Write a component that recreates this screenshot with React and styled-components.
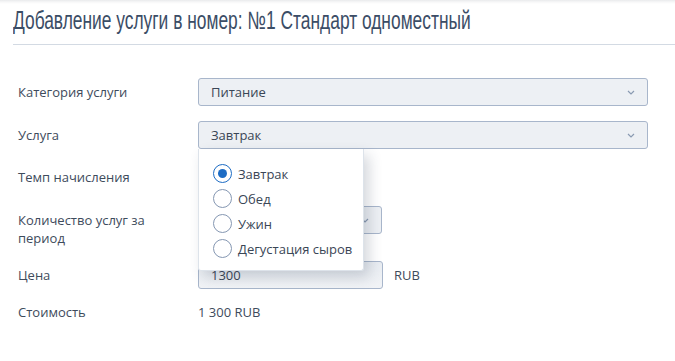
import React from "react";
import styled, { createGlobalStyle } from "styled-components";

const GlobalStyle = createGlobalStyle`
  html, body {
    margin: 0;
    padding: 0;
    background: #ffffff;
  }
  body {
    font-family: "Open Sans", "Noto Sans", sans-serif;
    color: #3e4b5c;
  }
`;

const Page = styled.div`
  width: 675px;
  height: 361px;
  overflow: hidden;
  background: linear-gradient(to bottom, #e9eaec 0px, #f7f7f8 2px, #ffffff 4px);
`;

const Header = styled.div`
  margin-left: 13px;
  padding-top: 5px;
  padding-bottom: 9px;
  border-bottom: 1px solid #d3dae3;
`;

const Title = styled.h1`
  margin: 0;
  font-family: "Liberation Sans", Arial, sans-serif;
  font-weight: 400;
  font-size: 25px;
  line-height: 30px;
  color: #3b4d66;
  white-space: nowrap;
  transform: scaleX(0.695);
  transform-origin: left center;
`;

const Form = styled.div`
  display: flex;
  flex-direction: column;
  gap: 14px;
  padding: 33px 0 0 18px;
`;

const Row = styled.div`
  display: grid;
  grid-template-columns: 180px 1fr;
  align-items: ${(p) => (p.$top ? "start" : "center")};
  min-height: ${(p) => p.$h || 28}px;
  margin-top: ${(p) => p.$mt || 0}px;
`;

const Label = styled.div`
  font-size: 13px;
  line-height: 18px;
  color: #3e4b5c;
  padding-top: ${(p) => (p.$top ? 5 : 0)}px;
  width: ${(p) => p.$w || "auto"};
`;

const Control = styled.div`
  position: relative;
  display: flex;
  align-items: center;
  gap: 11px;
`;

const SelectBox = styled.div`
  box-sizing: border-box;
  width: ${(p) => p.$w}px;
  height: 28px;
  display: flex;
  align-items: center;
  justify-content: space-between;
  padding: 0 12px 0 12px;
  background: #edf0f4;
  border: 1px solid #a8b6cb;
  border-radius: 3px;
  font-size: 13px;
  color: #3a4656;
`;

const Chevron = () => (
  <svg width="8" height="5" viewBox="0 0 8 5">
    <path d="M1 1 L4 4 L7 1" fill="none" stroke="#8a9ab2" strokeWidth="1.2" />
  </svg>
);

const InputBox = styled.div`
  box-sizing: border-box;
  width: 185px;
  height: 28px;
  display: flex;
  align-items: center;
  padding: 0 12px;
  background: linear-gradient(to bottom, #e9edf2, #f1f3f6);
  border: 1px solid #a8b6cb;
  border-radius: 3px;
  font-size: 13px;
  color: #3a4656;
`;

const Unit = styled.span`
  font-size: 13px;
  color: #3e4b5c;
`;

const Value = styled.div`
  font-size: 13px;
  line-height: 18px;
  color: #3e4b5c;
`;

const Dropdown = styled.div`
  position: absolute;
  top: 28px;
  left: 0;
  z-index: 5;
  box-sizing: border-box;
  width: 166px;
  padding: 12px 0 9px 14px;
  background: #ffffff;
  border: 1px solid #dde3ea;
  border-top: none;
  border-radius: 0 0 3px 3px;
  box-shadow: 5px 6px 14px rgba(40, 55, 80, 0.2);
  display: flex;
  flex-direction: column;
`;

const Option = styled.label`
  display: flex;
  align-items: center;
  gap: 6px;
  height: 25px;
  font-size: 13px;
  color: #3a4656;
  white-space: nowrap;
`;

const Radio = styled.span`
  box-sizing: border-box;
  width: 19px;
  height: 19px;
  border-radius: 50%;
  border: 1.5px solid ${(p) => (p.$on ? "#1d6cc4" : "#8597b2")};
  display: flex;
  align-items: center;
  justify-content: center;
  background: #fff;

  &::after {
    content: "";
    display: ${(p) => (p.$on ? "block" : "none")};
    width: 9px;
    height: 9px;
    border-radius: 50%;
    background: #1d6cc4;
  }
`;

const options = ["Завтрак", "Обед", "Ужин", "Дегустация сыров"];

export default function App() {
  return (
    <Page>
      <GlobalStyle />
      <Header>
        <Title>Добавление услуги в номер: №1 Стандарт одноместный</Title>
      </Header>
      <Form>
        <Row>
          <Label>Категория услуги</Label>
          <Control>
            <SelectBox $w={450}>
              <span>Питание</span>
              <Chevron />
            </SelectBox>
          </Control>
        </Row>
        <Row $mt={1}>
          <Label>Услуга</Label>
          <Control>
            <SelectBox $w={450}>
              <span>Завтрак</span>
              <Chevron />
            </SelectBox>
            <Dropdown>
              {options.map((o, i) => (
                <Option key={o}>
                  <Radio $on={i === 0} />
                  {o}
                </Option>
              ))}
            </Dropdown>
          </Control>
        </Row>
        <Row>
          <Label>Темп начисления</Label>
          <Control />
        </Row>
        <Row $top $h={40} $mt={1}>
          <Label $top $w="160px">
            Количество услуг за период
          </Label>
          <Control>
            <SelectBox $w={184}>
              <span>1</span>
              <Chevron />
            </SelectBox>
          </Control>
        </Row>
        <Row>
          <Label>Цена</Label>
          <Control>
            <InputBox>1300</InputBox>
            <Unit>RUB</Unit>
          </Control>
        </Row>
        <Row $h={18}>
          <Label>Стоимость</Label>
          <Value>1 300 RUB</Value>
        </Row>
      </Form>
    </Page>
  );
}
